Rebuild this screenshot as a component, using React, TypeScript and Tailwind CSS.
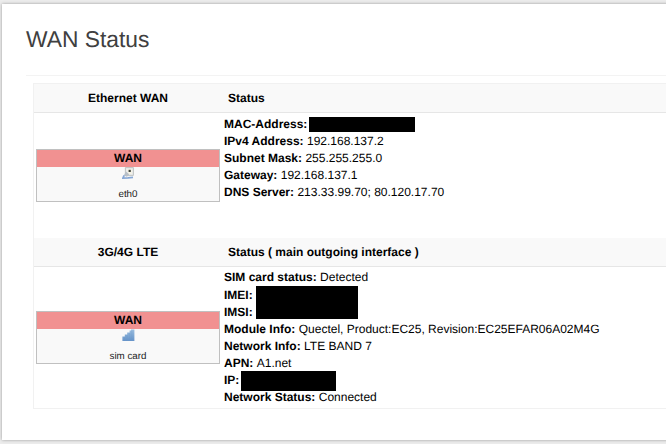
import type { ReactNode } from "react";

const FONT = "font-['Liberation_Sans',Arial,sans-serif] [text-rendering:geometricPrecision]";

function EthernetIcon() {
  return (
    <svg width="13" height="13" viewBox="0 0 13 13" className="block">
      <path d="M3.4 .6H11.4V8.4H6L3.4 8Z" fill="#eceded" stroke="#b9bdbb" strokeWidth="0.9" />
      <path d="M5 2H10V7H6Z" fill="#f4f2e6" />
      <rect x="6.6" y="2.8" width="2.2" height="2.2" fill="#44483f" />
      <path d="M4 4.6L7.2 7.2L5 9.8L1.8 8.4Z" fill="#b8bfc7" />
      <path d="M2.2 8.4L.9 11.2L6 10.9L11 10.4" fill="none" stroke="#86a7d5" strokeWidth="1.7" />
    </svg>
  );
}

function SignalIcon() {
  return (
    <svg width="13" height="12" viewBox="0 0 13 12" className="block">
      <defs>
        <linearGradient id="signal" x1="0" y1="0" x2="0" y2="12" gradientUnits="userSpaceOnUse">
          <stop offset="0" stopColor="#9dbfe0" />
          <stop offset="1" stopColor="#6694c9" />
        </linearGradient>
      </defs>
      <path d="M.4 12V7.4H2.8V5.4H5.2V3.4H7.6V1.6H9V.6H12.4V12Z" fill="url(#signal)" />
      <path d="M2.8 8V12M5.2 6V12M7.6 4V12M9.8 2V12" stroke="#6c98cb" strokeOpacity=".5" strokeWidth=".5" />
    </svg>
  );
}

function Header({ name, status }: { name: string; status: string }) {
  return (
    <div className="flex h-[29px] shrink-0 items-center border-b border-[#e6e6e6] bg-[#f9f9f9] text-[12px] font-bold">
      <div className="w-[188px] text-center">{name}</div>
      <div className="pl-[6px]">{status}</div>
    </div>
  );
}

function PortBox({ icon, label }: { icon: ReactNode; label: string }) {
  return (
    <div className="ml-[2px] flex h-[53px] w-[184px] flex-col items-center border border-[#c0c0c0] bg-[#f9f9f9]">
      <div className="h-[17px] w-full shrink-0 bg-[#f19191] text-center text-[12px] leading-[17px] font-bold">WAN</div>
      <div className="h-[21px]">{icon}</div>
      <div className="text-[9.8px] leading-[13px] text-[#222]">{label}</div>
    </div>
  );
}

function Row({ label, children }: { label: string; children?: ReactNode }) {
  return (
    <div className="flex h-[17.15px] items-center gap-[3.4px] whitespace-nowrap">
      <b>{label}</b>
      {children}
    </div>
  );
}

export default function App() {
  return (
    <div className={`h-[444px] w-[666px] overflow-hidden bg-[#ececec] pt-[4px] pl-[2px] text-black ${FONT}`}>
      <main className="h-[436px] w-[680px] bg-white pt-[20px] pl-[24px] shadow-[0_0_3px_rgba(0,0,0,0.35)]">
        <h1 className="h-[51px] text-[22.8px] leading-[31px] text-[#404040]">WAN Status</h1>
        <div className="border-t border-[#f3f3f3] pt-[7px] pl-[7px]">
          <div className="flex h-[326px] flex-col border border-[#f1f1f1]">
            <Header name="Ethernet WAN" status="Status" />
            <div className="flex h-[125px] shrink-0">
              <div className="w-[190px] pt-[36px]">
                <PortBox icon={<EthernetIcon />} label="eth0" />
              </div>
              <div className="pt-[2px] text-[12px]">
                <Row label="MAC-Address:">
                  <span className="-ml-[1.4px] mt-px h-[15px] w-[106px] bg-black" />
                </Row>
                <Row label="IPv4 Address:">192.168.137.2</Row>
                <Row label="Subnet Mask:">255.255.255.0</Row>
                <Row label="Gateway:">192.168.137.1</Row>
                <Row label="DNS Server:">213.33.99.70; 80.120.17.70</Row>
              </div>
            </div>
            <Header name="3G/4G LTE" status="Status ( main outgoing interface )" />
            <div className="flex">
              <div className="w-[190px] pt-[44px]">
                <PortBox icon={<SignalIcon />} label="sim card" />
              </div>
              <div className="pt-[1.8px] text-[12px]">
                <Row label="SIM card status:">Detected</Row>
                <div className="flex h-[34.3px] items-center gap-[3px]">
                  <div>
                    <Row label="IMEI:" />
                    <Row label="IMSI:" />
                  </div>
                  <span className="mb-[1px] h-[33px] w-[102px] bg-black" />
                </div>
                <Row label="Module Info:">Quectel, Product:EC25, Revision:EC25EFAR06A02M4G</Row>
                <Row label="Network Info:">LTE BAND 7</Row>
                <Row label="APN:">A1.net</Row>
                <Row label="IP:">
                  <span className="-ml-[1.4px] mt-px h-[20px] w-[95px] bg-black" />
                </Row>
                <Row label="Network Status:">Connected</Row>
              </div>
            </div>
          </div>
        </div>
      </main>
    </div>
  );
}
